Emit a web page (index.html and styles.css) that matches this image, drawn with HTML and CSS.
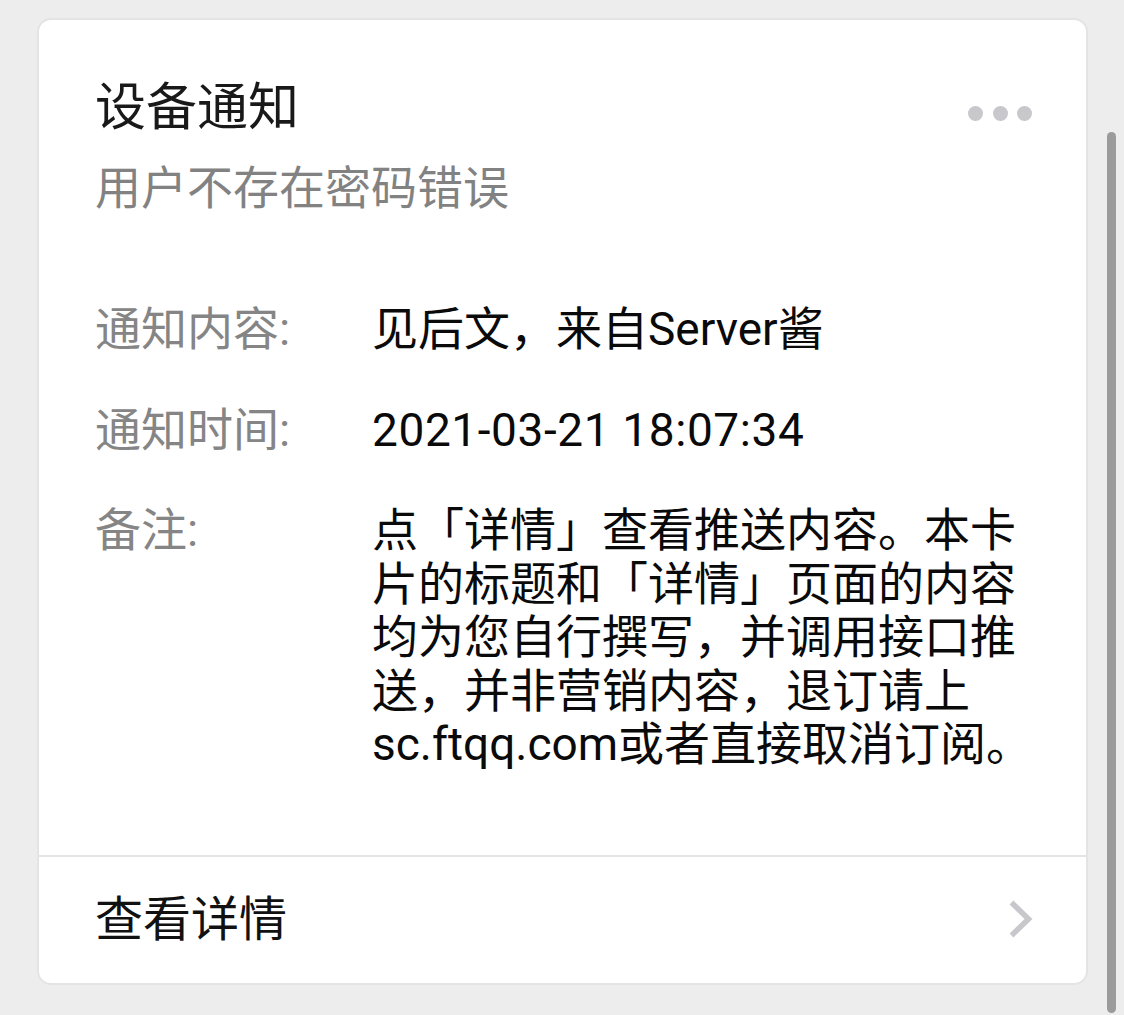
FILE: index.html
```html
<!DOCTYPE html>
<html lang="zh-CN">
<head>
<meta charset="utf-8">
<title>设备通知</title>
<link rel="stylesheet" href="styles.css">
</head>
<body>
<div class="card">
  <div class="card-body">
    <div class="header">
      <div class="header-text">
        <div class="title">设备通知</div>
        <div class="subtitle">用户不存在密码错误</div>
      </div>
      <div class="more"><span></span><span></span><span></span></div>
    </div>
    <div class="fields">
      <div class="row">
        <div class="label">通知内容:</div>
        <div class="value">见后文，来自Server酱</div>
      </div>
      <div class="row">
        <div class="label">通知时间:</div>
        <div class="value date">2021-03-21 18:07:34</div>
      </div>
      <div class="row">
        <div class="label">备注:</div>
        <div class="value">点「详情」查看推送内容。本卡片的标题和「详情」页面的内容均为您自行撰写，并调用接口推送，并非营销内容，退订请上sc.ftqq.com或者直接取消订阅。</div>
      </div>
    </div>
  </div>
  <div class="footer">
    <span class="footer-text">查看详情</span>
    <svg class="chevron" width="26" height="38" viewBox="0 0 26 38"><polyline points="3.5,2.5 20.5,19 3.5,35.5" fill="none" stroke="#c8c8cc" stroke-width="5.5" stroke-linejoin="miter"/></svg>
  </div>
</div>
<div class="scrollbar"></div>
</body>
</html>
```
FILE: styles.css
```css
html, body {
  margin: 0;
  padding: 0;
  background: #ededed;
}
body {
  font-family: Roboto, "Noto Sans CJK SC", sans-serif;
  padding: 20px 0 0 39px;
  height: 1015px;
  box-sizing: border-box;
  overflow: hidden;
}
.card {
  width: 1047px;
  height: 963px;
  background: #ffffff;
  border-radius: 12px;
  box-shadow: 0 0 0 2px #e4e4e4;
  display: flex;
  flex-direction: column;
  box-sizing: border-box;
}
.card-body {
  padding: 48px 54px 0 56px;
  height: 835px;
  box-sizing: border-box;
}
.header {
  display: flex;
  justify-content: space-between;
  align-items: flex-start;
}
.title {
  font-size: 51px;
  line-height: 71px;
  color: #191919;
  font-family: "Noto Sans CJK SC", sans-serif;
}
.subtitle {
  margin-top: 15px;
  font-size: 46px;
  line-height: 60px;
  color: #828282;
  font-family: "Noto Sans CJK SC", sans-serif;
}
.more {
  display: flex;
  gap: 9.5px;
  margin-top: 37.5px;
}
.more span {
  width: 15px;
  height: 15px;
  border-radius: 50%;
  background: #c8c7cc;
}
.fields {
  margin-top: 89px;
  display: flex;
  flex-direction: column;
  gap: 47px;
}
.row {
  display: flex;
  font-size: 46px;
  line-height: 53.5px;
}
.label {
  width: 277px;
  flex: none;
  color: #858585;
}
.value {
  flex: 0 0 686px;
  color: #0a0a0a;
}
.date {
  letter-spacing: 0.6px;
}
.footer {
  border-top: 2px solid #e5e5e5;
  padding: 29px 54px 0 56px;
  display: flex;
  align-items: flex-start;
  justify-content: space-between;
}
.footer-text {
  font-size: 48px;
  line-height: 58px;
  color: #111111;
  font-family: "Noto Sans CJK SC", sans-serif;
}
.chevron {
  margin-top: 14px;
  margin-right: -2px;
}
.scrollbar {
  position: fixed;
  right: 8px;
  top: 132px;
  bottom: 2px;
  width: 9px;
  border-radius: 5px;
  background: #9b9b9b;
}
```
